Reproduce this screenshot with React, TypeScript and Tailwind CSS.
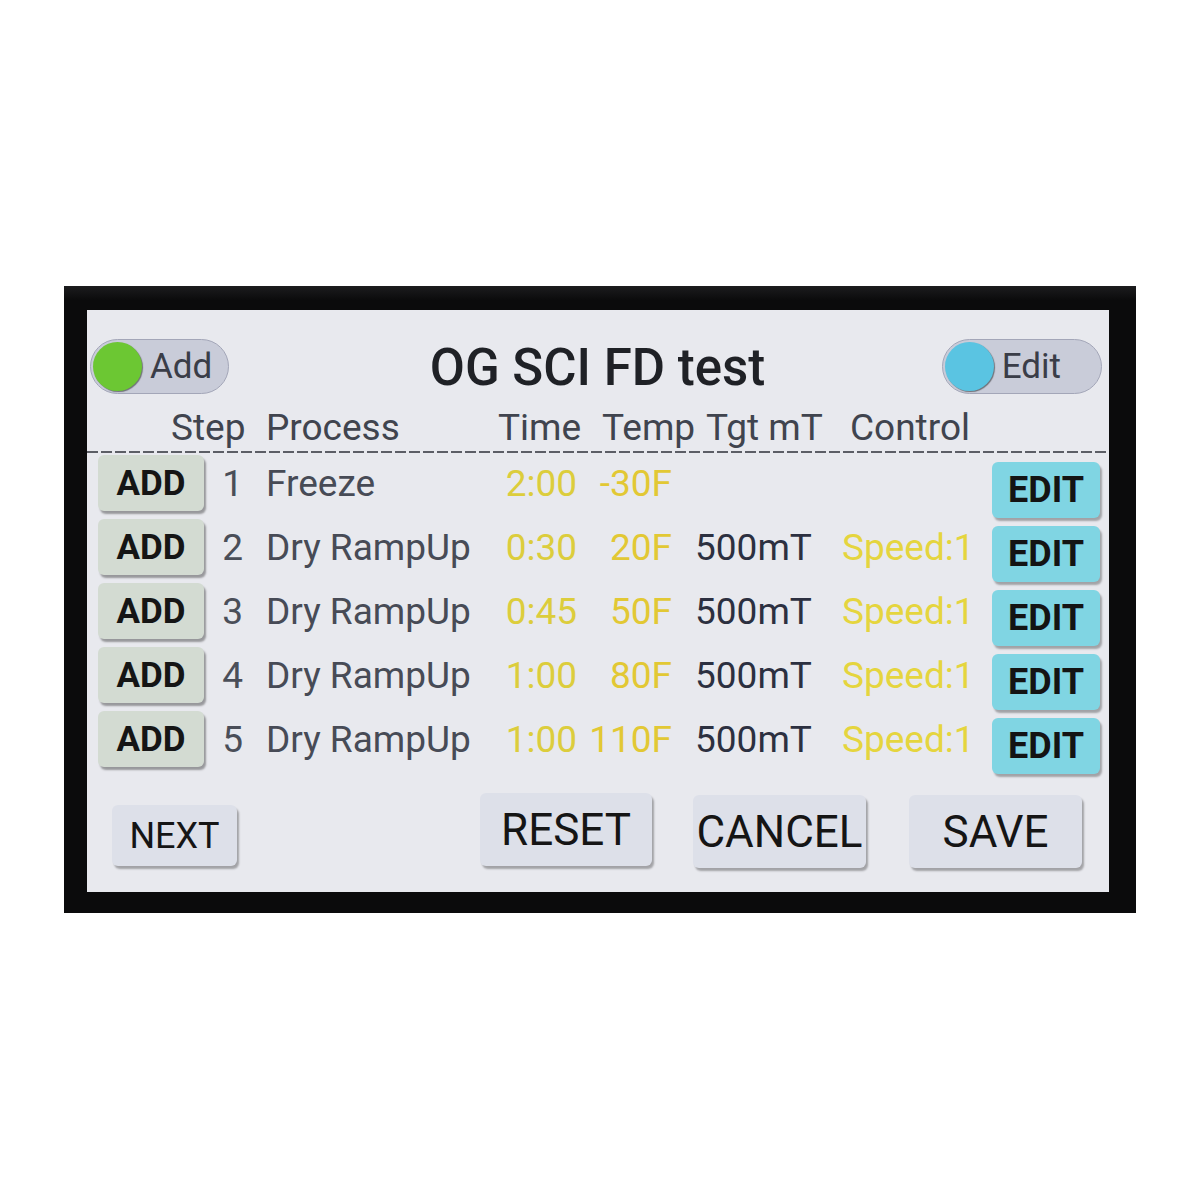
import React from 'react';

// Touch-panel recipe editor, photographed inside its black bezel.
type Step = {
  n: number;
  process: string;
  time: string;
  temp: string;
  tgt: string;
  control: string;
};

const STEPS: Step[] = [
  { n: 1, process: 'Freeze', time: '2:00', temp: '-30F', tgt: '', control: '' },
  { n: 2, process: 'Dry RampUp', time: '0:30', temp: '20F', tgt: '500mT', control: 'Speed:1' },
  { n: 3, process: 'Dry RampUp', time: '0:45', temp: '50F', tgt: '500mT', control: 'Speed:1' },
  { n: 4, process: 'Dry RampUp', time: '1:00', temp: '80F', tgt: '500mT', control: 'Speed:1' },
  { n: 5, process: 'Dry RampUp', time: '1:00', temp: '110F', tgt: '500mT', control: 'Speed:1' },
];

const Toggle: React.FC<{ label: string; dot: string; pad: string }> = ({ label, dot, pad }) => (
  <div className={`flex h-[55px] items-center rounded-full border border-[#a3a6b8] bg-[#c9ccd9] pl-[2px] ${pad}`}>
    <span
      className={`size-[49px] shrink-0 rounded-full shadow-[1px_1px_1px_rgba(0,0,0,0.45)] ${dot}`}
    />
    <span className="ml-[8px] text-[35px] leading-none text-[#3a3d48]">{label}</span>
  </div>
);

const App: React.FC = () => {
  return (
    <div className="flex h-[1200px] w-[1200px] items-start bg-white font-[family-name:Roboto,'Noto_Sans',sans-serif]">
      {/* Bezel */}
      <div className="ml-[64px] mt-[286px] h-[627px] w-[1072px] bg-[linear-gradient(180deg,#1c1c1e_0px,#0b0b0c_14px)] pb-[21px] pl-[23px] pr-[27px] pt-[24px]">
        {/* Screen */}
        <div className="flex h-full w-full flex-col bg-[#e8e9ee]">
          {/* Title bar */}
          <div className="flex h-[94px] items-start justify-between pl-[3px] pr-[7px] pt-[29px]">
            <Toggle label="Add" dot="bg-[#6cc733]" pad="pr-[16px]" />
            <h1 className="ml-[24px] mt-[1px] text-[51px] font-medium leading-[55px] text-[#1f2126]">
              OG SCI FD test
            </h1>
            <Toggle label="Edit" dot="bg-[#5ac4e2]" pad="pr-[40px]" />
          </div>

          {/* Column headings */}
          <div className="flex h-[47px] items-center pl-[84px] text-[37px] leading-none text-[#40444e]">
            <span className="w-[95px]">Step</span>
            <span className="w-[232px]">Process</span>
            <span className="w-[104px]">Time</span>
            <span className="w-[104px]">Temp</span>
            <span className="w-[144px]">Tgt mT</span>
            <span>Control</span>
          </div>
          <div className="h-[2px] w-full bg-[repeating-linear-gradient(90deg,#5c5e66_0_11px,transparent_11px_14px)]" />

          {/* Steps */}
          <div className="mt-[2px] flex flex-col">
            {STEPS.map((s) => (
              <div key={s.n} className="flex h-[64px] items-start text-[37px] leading-none">
                <button className="ml-[11px] h-[56px] w-[106px] rounded-[6px] bg-[#d3dbd2] text-[35px] font-bold text-[#151515] shadow-[2px_3px_2px_rgba(0,0,0,0.35)]">
                  ADD
                </button>
                <div className="flex h-[56px] w-[39px] items-center justify-end text-[#4a4e58]">{s.n}</div>
                <div className="flex h-[56px] w-[254px] items-center pl-[23px] text-[#474b56]">{s.process}</div>
                <div className="flex h-[56px] w-[80px] items-center justify-end text-[#dccd3c]">{s.time}</div>
                <div className="flex h-[56px] w-[95px] items-center justify-end text-[#e2c834]">{s.temp}</div>
                <div className="flex h-[56px] w-[150px] items-center pl-[23px] text-[#2c3040]">{s.tgt}</div>
                <div className="flex h-[56px] w-[170px] items-center pl-[20px] text-[#e5d53e]">{s.control}</div>
                <button className="mt-[7px] h-[56px] w-[108px] rounded-[6px] bg-[#80d5e3] text-[36px] font-bold text-[#141414] shadow-[2px_3px_2px_rgba(0,0,0,0.3)]">
                  EDIT
                </button>
              </div>
            ))}
          </div>

          {/* Actions */}
          <div className="mt-[18px] flex h-[75px] items-end pl-[25px]">
            <button className="mb-[2px] h-[61px] w-[125px] rounded-[6px] bg-[#dde0e9] text-[36px] text-[#151515] shadow-[2px_3px_2px_rgba(0,0,0,0.3)]">
              NEXT
            </button>
            <button className="mb-[2px] ml-[243px] h-[73px] w-[172px] rounded-[6px] bg-[#dde0e9] text-[44px] text-[#151515] shadow-[2px_3px_2px_rgba(0,0,0,0.3)]">
              RESET
            </button>
            <button className="ml-[41px] h-[73px] w-[173px] rounded-[6px] bg-[#dde0e9] text-[44px] text-[#151515] shadow-[2px_3px_2px_rgba(0,0,0,0.3)]">
              CANCEL
            </button>
            <button className="ml-[43px] h-[73px] w-[173px] rounded-[6px] bg-[#dde0e9] text-[44px] text-[#151515] shadow-[2px_3px_2px_rgba(0,0,0,0.3)]">
              SAVE
            </button>
          </div>
        </div>
      </div>
    </div>
  );
};

export default App;
